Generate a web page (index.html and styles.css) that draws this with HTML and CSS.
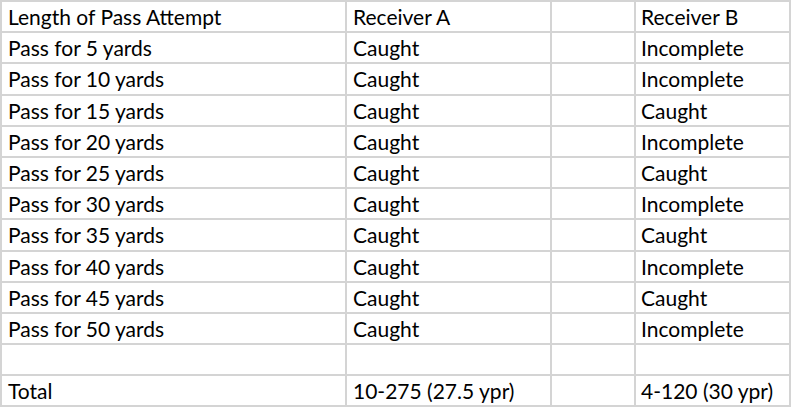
FILE: index.html
```html
<!DOCTYPE html>
<html>
<head>
<meta charset="utf-8">
<link rel="stylesheet" href="styles.css">
</head>
<body>
<table class="sheet">
  <colgroup>
    <col class="c1"><col class="c2"><col class="c3"><col class="c4">
  </colgroup>
  <tr><td>Length of Pass Attempt</td><td>Receiver A</td><td></td><td>Receiver B</td></tr>
  <tr><td>Pass for 5 yards</td><td>Caught</td><td></td><td>Incomplete</td></tr>
  <tr><td>Pass for 10 yards</td><td>Caught</td><td></td><td>Incomplete</td></tr>
  <tr><td>Pass for 15 yards</td><td>Caught</td><td></td><td>Caught</td></tr>
  <tr><td>Pass for 20 yards</td><td>Caught</td><td></td><td>Incomplete</td></tr>
  <tr><td>Pass for 25 yards</td><td>Caught</td><td></td><td>Caught</td></tr>
  <tr><td>Pass for 30 yards</td><td>Caught</td><td></td><td>Incomplete</td></tr>
  <tr><td>Pass for 35 yards</td><td>Caught</td><td></td><td>Caught</td></tr>
  <tr><td>Pass for 40 yards</td><td>Caught</td><td></td><td>Incomplete</td></tr>
  <tr><td>Pass for 45 yards</td><td>Caught</td><td></td><td>Caught</td></tr>
  <tr><td>Pass for 50 yards</td><td>Caught</td><td></td><td>Incomplete</td></tr>
  <tr><td></td><td></td><td></td><td></td></tr>
  <tr><td>Total</td><td>10-275 (27.5 ypr)</td><td></td><td>4-120 (30 ypr)</td></tr>
</table>
</body>
</html>
```
FILE: styles.css
```css
html, body {
  margin: 0;
  padding: 0;
  background: #ffffff;
}
.sheet {
  table-layout: fixed;
  width: 791px;
  border-collapse: separate;
  border-spacing: 2px;
  background: #d4d4d4;
  font-family: Lato, "Open Sans", sans-serif;
  font-size: 21px;
  color: #000;
}
.c1 { width: 343px; }
.c2 { width: 203px; }
.c3 { width: 82px; }
.c4 { width: 153px; }
.sheet td {
  background: #ffffff;
  height: 29.2px;
  padding: 0 0 0 6px;
  line-height: 29px;
  white-space: nowrap;
  overflow: hidden;
  vertical-align: middle;
  box-sizing: border-box;
}
.sheet td:nth-child(4) {
  padding-left: 5px;
}
```
